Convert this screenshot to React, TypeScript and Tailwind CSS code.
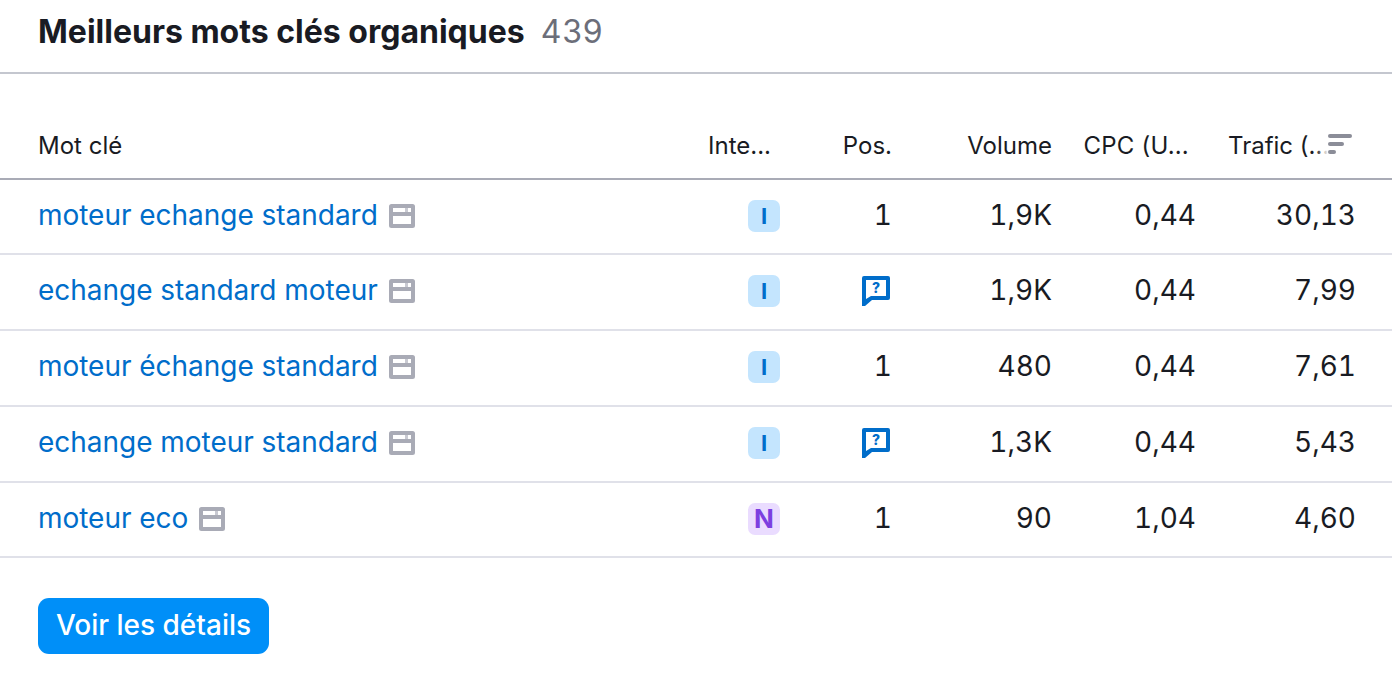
const inter = { fontFamily: 'Inter, sans-serif' };

type Row = {
  keyword: string;
  intent: 'I' | 'N';
  pos: string | null;
  volume: string;
  cpc: string;
  traffic: string;
};

const rows: Row[] = [
  { keyword: 'moteur echange standard', intent: 'I', pos: '1', volume: '1,9K', cpc: '0,44', traffic: '30,13' },
  { keyword: 'echange standard moteur', intent: 'I', pos: null, volume: '1,9K', cpc: '0,44', traffic: '7,99' },
  { keyword: 'moteur échange standard', intent: 'I', pos: '1', volume: '480', cpc: '0,44', traffic: '7,61' },
  { keyword: 'echange moteur standard', intent: 'I', pos: null, volume: '1,3K', cpc: '0,44', traffic: '5,43' },
  { keyword: 'moteur eco', intent: 'N', pos: '1', volume: '90', cpc: '1,04', traffic: '4,60' },
];

const gridCols = 'grid grid-cols-[708px_72px_112px_160px_144px_160px]';

function SerpIcon() {
  return (
    <svg width="26" height="24" viewBox="0 0 26 24" className="shrink-0">
      <path
        fillRule="evenodd"
        fill="#a9abb6"
        d="M2.500 0h21A2.500 2.500 0 0 1 26 2.500v19a2.500 2.500 0 0 1-2.500 2.500h-21A2.500 2.500 0 0 1 0 21.500v-19A2.500 2.500 0 0 1 2.500 0ZM4 4v4h18V4H4Zm0 8v8h18v-8H4Z"
      />
      <rect x="16" y="4" width="3" height="4" fill="#c9cad2" />
    </svg>
  );
}

function QuestionIcon() {
  return (
    <svg width="28" height="30" viewBox="0 0 28 30" className="mr-[2px] shrink-0">
      <path
        fillRule="evenodd"
        fill="#006dca"
        d="M2 0h24a2 2 0 0 1 2 2v20a2 2 0 0 1-2 2H10l-7 6H0V2a2 2 0 0 1 2-2Zm2 4v19l5-3h15V4H4Z"
      />
      <text x="14" y="17" textAnchor="middle" fontSize="14" fontWeight="800" fill="#006dca" style={inter}>
        ?
      </text>
    </svg>
  );
}

function SortIcon() {
  return (
    <svg width="24" height="20" viewBox="0 0 24 20" className="absolute right-[4px] top-[4px]">
      <rect x="0" y="0" width="24" height="4" rx="2" fill="#8b8d98" />
      <rect x="0" y="8" width="16" height="4" rx="2" fill="#8b8d98" />
      <rect x="0" y="16" width="8" height="4" rx="2" fill="#8b8d98" />
    </svg>
  );
}

function IntentBadge({ intent }: { intent: 'I' | 'N' }) {
  const color = intent === 'I' ? 'bg-[#c4e5fe] text-[#006dca] text-[22px]' : 'bg-[#eadcff] text-[#7c3fe0] text-[26px]';
  return (
    <div className={`flex h-8 w-8 items-center justify-center rounded-[7px] font-bold ${color}`}>
      {intent}
    </div>
  );
}

export default function App() {
  return (
    <div className="h-[690px] w-[1392px] overflow-hidden bg-white text-[#191b23]" style={inter}>
      <div className="flex h-[74px] items-start gap-[16px] border-b-2 border-[#c4c7cf] pl-[38px] pt-[11px]">
        <h2 className="text-[32px] leading-[42px] font-bold">Meilleurs mots clés organiques</h2>
        <span className="text-[32px] leading-[42px] font-normal tracking-[0.9px] text-[#6c6e79]">439</span>
      </div>

      <div className={`${gridCols} mt-[46px] h-[60px] items-start border-b-2 border-[#a9abb6] pt-[10px] text-[24px] leading-[32px]`}>
        <div className="pl-[38px]">Mot clé</div>
        <div>Inte...</div>
        <div className="text-right">Pos.</div>
        <div className="text-right">Volume</div>
        <div className="pr-[7px] text-right tracking-[0.2px]">CPC (U...</div>
        <div className="relative pl-[32px]">
          Trafic (...
          <div className="absolute right-[28px] top-0 h-8 w-3 bg-gradient-to-r from-transparent to-white" />
          <SortIcon />
        </div>
      </div>

      <div>
        {rows.map((row) => (
          <div
            key={row.keyword}
            className={`${gridCols} h-[76px] items-center border-b-2 border-[#e0e1e9] pb-[2px] text-[28px] leading-[36px] first:h-[75px] last:h-[75px]`}
          >
            <div className="flex items-center gap-[11px] pl-[38px] text-[#006dca]">
              <span className="pb-[2px] tracking-[-0.03px]">{row.keyword}</span>
              <SerpIcon />
            </div>
            <div className="flex justify-end pl-[40px]">
              <IntentBadge intent={row.intent} />
            </div>
            <div className="flex justify-end tabular-nums">
              {row.pos ? <span className="pb-[2px]">{row.pos}</span> : <QuestionIcon />}
            </div>
            <div className="pb-[2px] text-right tabular-nums">{row.volume}</div>
            <div className="pb-[2px] text-right tabular-nums">{row.cpc}</div>
            <div className="pb-[2px] text-right tabular-nums">{row.traffic}</div>
          </div>
        ))}
      </div>

      <button className="ml-[38px] mt-[40px] h-14 w-[231px] rounded-[11px] bg-[#008ff8] pb-[2px] text-[28px] font-medium text-white">
        Voir les détails
      </button>
    </div>
  );
}
